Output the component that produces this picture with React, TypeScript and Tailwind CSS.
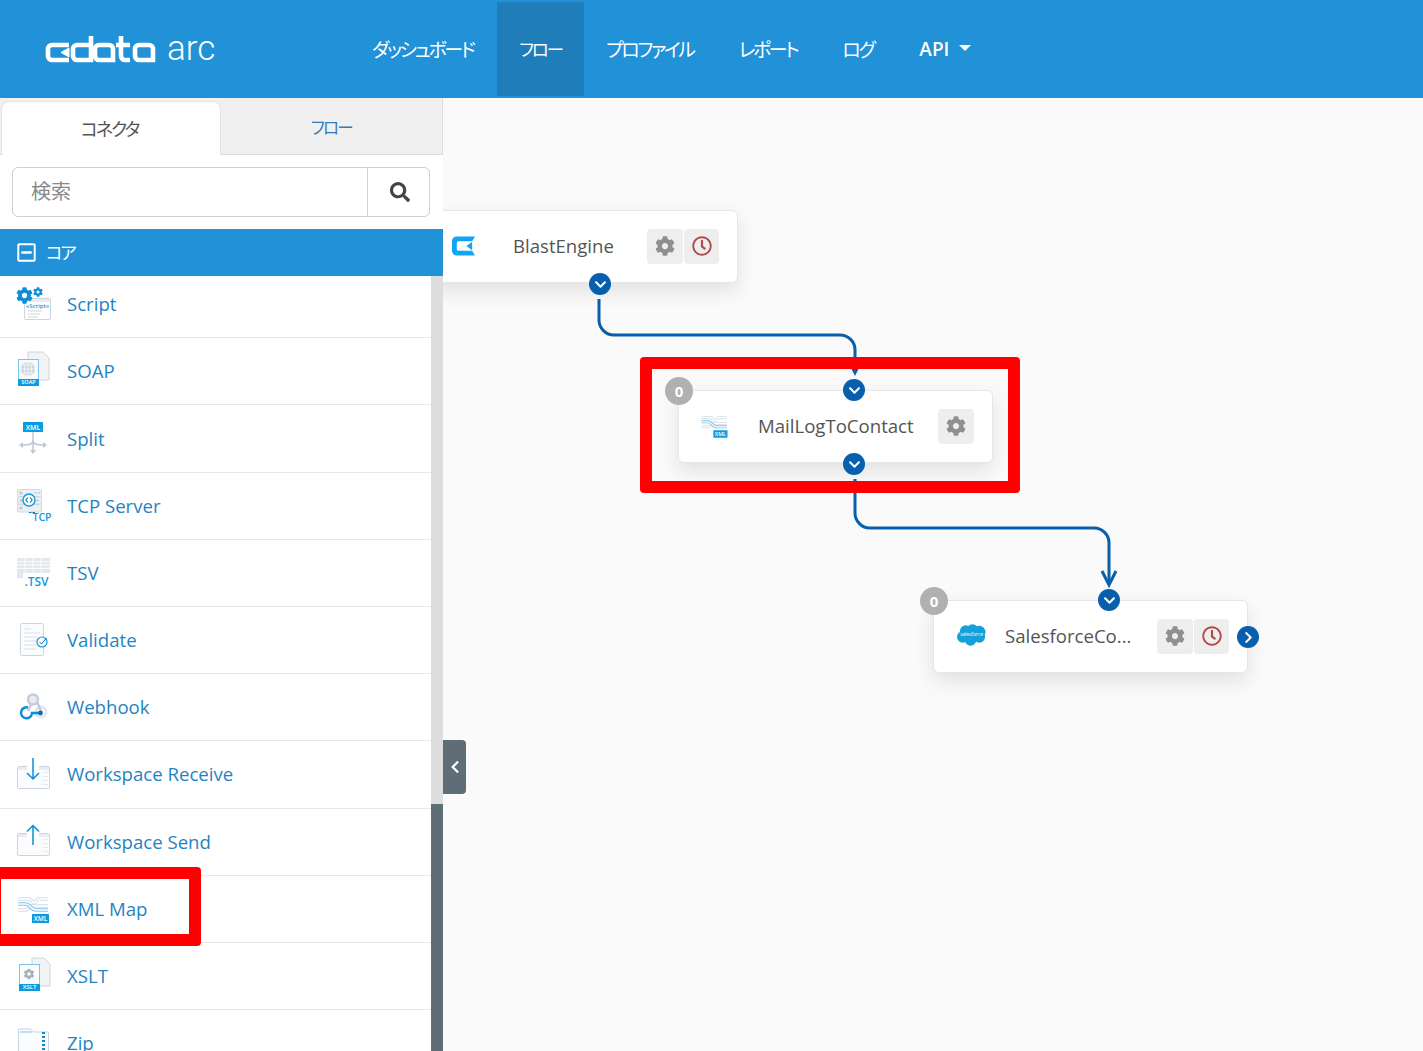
import type { ReactNode } from "react";
import { FaChevronDown, FaChevronLeft, FaChevronRight, FaCog, FaRegClock, FaRegMinusSquare, FaSearch } from "react-icons/fa";

const blue = "#0d9be0";
const grey = "#cdd5e0";
const pale = "#e9edf2";

function IconBox({ children, size = 36 }: { children: ReactNode; size?: number }) {
  return (
    <svg width={size} height={size} viewBox="0 0 36 36" className="overflow-visible shrink-0">
      {children}
    </svg>
  );
}

function Label({ x, y, w, h, text, size }: { x: number; y: number; w: number; h: number; text: string; size: number }) {
  return (
    <g>
      <rect x={x} y={y} width={w} height={h} fill={blue} rx="0.5" />
      <text x={x + w / 2} y={y + h - 1.8} textAnchor="middle" fill="#fff" fontSize={size} fontWeight="600" fontFamily="Open Sans, sans-serif">
        {text}
      </text>
    </g>
  );
}

function Doc({ x, y, w, h }: { x: number; y: number; w: number; h: number }) {
  return <path d={`M${x} ${y}H${x + w - 6}L${x + w} ${y + 6}V${y + h}H${x}Z`} fill="#f1f3f6" stroke={grey} strokeWidth="1" />;
}

function ScriptIcon() {
  return (
    <IconBox>
      <rect x="8.5" y="12.5" width="26" height="21" rx="1.5" fill="#fff" stroke={grey} />
      <rect x="9" y="13" width="25" height="3" fill={pale} />
      <text x="21.5" y="22" textAnchor="middle" fontSize="6" fill={blue} fontFamily="Open Sans, sans-serif" fontWeight="600">
        «Script»
      </text>
      <path d="M12 25h14M12 28h12M12 31h10" stroke={grey} strokeWidth="1" />
      <FaCog x={0} y={1} size={17} color="#0a8ed6" />
      <FaCog x={17} y={1} size={10} color="#0a8ed6" />
    </IconBox>
  );
}

function SoapIcon() {
  return (
    <IconBox>
      <Doc x={12} y={-1} w={21} h={28} />
      <rect x="2.5" y="6.5" width="20" height="26" fill="#f7fafc" stroke="#7cc6ee" />
      <circle cx="12" cy="16" r="7" fill={grey} />
      <path d="M5 16h14M12 9v14M7 12h10M7 20h10" stroke="#fff" strokeWidth="0.7" />
      <ellipse cx="12" cy="16" rx="3.5" ry="7" fill="none" stroke="#fff" strokeWidth="0.7" />
      <Label x={2} y={26} w={21} h={7} text="SOAP" size={5.5} />
    </IconBox>
  );
}

function SplitIcon() {
  return (
    <IconBox>
      <path d="M17 12v21M17 20c0 4-3 5-11 5M17 20c0 4 3 5 12 5" fill="none" stroke="#bcc8d6" strokeWidth="1.5" />
      <path d="M14 30l3 4 3-4zM7 22l-4 3 4 3zM27 22l4 3-4 3z" fill="#bcc8d6" />
      <Label x={7} y={2} w={20} h={10} text="XML" size={7} />
    </IconBox>
  );
}

function TcpIcon() {
  return (
    <IconBox>
      <rect x="1.5" y="1.5" width="24" height="7" rx="1" fill="#edf0f3" stroke="#d3d9e1" />
      <rect x="1.5" y="9" width="24" height="7" fill="#edf0f3" stroke="#d3d9e1" />
      <rect x="1.5" y="16.5" width="24" height="7.500" rx="1" fill="#edf0f3" stroke="#d3d9e1" />
      <rect x="3.500" y="3.500" width="3" height="3" rx="1" fill="#c4ccd6" />
      <rect x="3.500" y="11" width="3" height="3" rx="1" fill="#c4ccd6" />
      <rect x="3.500" y="18.500" width="3" height="3" rx="1" fill="#c4ccd6" />
      <path d="M18 5h2.500M21.500 5h2.500M20 12.500h3" stroke="#b7c0cc" strokeWidth="1" />
      <circle cx="13" cy="12" r="6" fill="#fff" stroke={blue} strokeWidth="1.400" />
      <path d="M12 9.500l-2.200 2.500 2.200 2.500M14 9.500l2.200 2.500-2.200 2.500" fill="none" stroke="#0a6fb5" strokeWidth="1.100" />
      <path d="M13 24.500h2.500M16.500 24.500h2.500" stroke="#0a6fb5" strokeWidth="1.200" />
      <text x="26" y="33" textAnchor="middle" fontSize="10.500" fill={blue} fontWeight="600" fontFamily="Open Sans, sans-serif">
        TCP
      </text>
    </IconBox>
  );
}

function TsvIcon() {
  return (
    <IconBox>
      <rect x="1" y="3" width="33" height="15" fill="#e4e8ee" />
      <path d="M1 6.5h33M1 10h33M1 13.500h33M9 3v15M17 3v15M25 3v15" stroke="#fff" strokeWidth="0.8" />
      <rect x="1" y="18" width="6" height="5" fill="#e4e8ee" />
      <text x="20.500" y="31" textAnchor="middle" fontSize="12" fill={blue} fontWeight="600" fontFamily="Open Sans, sans-serif">
        .TSV
      </text>
    </IconBox>
  );
}

function ValidateIcon() {
  return (
    <IconBox>
      <rect x="4.500" y="1.500" width="23" height="32" rx="1" fill="#fbfcfd" stroke={grey} />
      <path d="M8 7h7M8 11h16M8 15h14M8 19h14M8 23h12M8 27h12" stroke="#d9dfe7" strokeWidth="1" />
      <circle cx="26" cy="20" r="5" fill="#fff" stroke={blue} strokeWidth="1.200" />
      <path d="M23.500 20l2 2 5-6" fill="none" stroke="#0a6fb5" strokeWidth="1" />
    </IconBox>
  );
}

function WebhookIcon() {
  return (
    <IconBox>
      <circle cx="25" cy="23" r="5" fill="none" stroke="#e3e7ec" strokeWidth="3" />
      <path d="M12 22l4-9" stroke="#c4ccd8" strokeWidth="2.500" />
      <circle cx="17" cy="10.500" r="5" fill="#e8ebf0" stroke="#c4ccd8" strokeWidth="2.500" />
      <path d="M21 13l4 9" stroke="#c4ccd8" strokeWidth="2.500" />
      <path d="M12 18.500a5.500 5.500 0 1 0 4 5.500h9" fill="none" stroke="#0a8ed6" strokeWidth="2.400" />
      <circle cx="24.500" cy="24" r="2.400" fill="#0a6fb5" />
    </IconBox>
  );
}

function WindowArrow({ up }: { up: boolean }) {
  const top = up ? 9.5 : 10.5;
  return (
    <IconBox>
      <rect x="1.500" y={top} width="32" height="22" rx="1.500" fill="#fbfcfd" stroke={grey} />
      <rect x="2" y={top + 0.5} width="31" height="3" fill={pale} />
      <path d={`M26 ${top + 6}h6M26 ${top + 10}h6M26 ${top + 14}h6M26 ${top + 18}h6`} stroke={pale} strokeWidth="1.200" />
      <rect x="11" y={top - 1} width="12" height="5.500" fill="#fff" />
      {up ? (
        <path d="M17 21V1.500M11 7.500l6-6 6 6" fill="none" stroke="#0a8ed6" strokeWidth="1.500" />
      ) : (
        <path d="M17 2v21M11 17l6 6 6-6" fill="none" stroke="#0a8ed6" strokeWidth="1.500" />
      )}
    </IconBox>
  );
}

function XmlMapIcon({ size = 36 }: { size?: number }) {
  const bands = [
    { d: "M2 8H14L18 12L22 8H32", color: "#d5dde6" },
    { d: "M2 19H10L15 15H32", color: "#d5dde6" },
    { d: "M2 13H10C14 13 15 19 20 19H32", color: "#7cc3ee" },
  ];
  return (
    <IconBox size={size}>
      {bands.map((b) => (
        <g key={b.d} fill="none">
          <path d={b.d} stroke={b.color} strokeWidth="3.600" />
          <path d={b.d} stroke="#fff" strokeWidth="1.600" />
        </g>
      ))}
      <Label x={16} y={23} w={17} h={9} text="XML" size={6.500} />
    </IconBox>
  );
}

function XsltIcon() {
  return (
    <IconBox>
      <Doc x={16} y={0} w={18} h={28} />
      <rect x="3.500" y="6.500" width="20" height="26" fill="#fbfcfd" stroke="#7cc6ee" />
      <FaCog x={7.500} y={10.500} size={11} color="#a7b1bd" />
      <Label x={3} y={26} w={21} h={7} text="XSLT" size={6} />
    </IconBox>
  );
}

function ZipIcon() {
  return (
    <IconBox>
      <path d="M2.500 4h12l3 3h15v28h-30z" fill="#fbfcfd" stroke="#c9d3df" />
      <path d="M4 7h12" stroke="#7cc6ee" />
      <path d="M26 8h3M26 12h3M26 16h3M26 20h3M26 24h3" stroke="#0a8ed6" strokeWidth="2" />
      <Label x={3} y={26} w={15} h={8} text="ZIP" size={6} />
    </IconBox>
  );
}

const connectors = [
  { name: "Script", icon: <ScriptIcon /> },
  { name: "SOAP", icon: <SoapIcon /> },
  { name: "Split", icon: <SplitIcon /> },
  { name: "TCP Server", icon: <TcpIcon /> },
  { name: "TSV", icon: <TsvIcon /> },
  { name: "Validate", icon: <ValidateIcon /> },
  { name: "Webhook", icon: <WebhookIcon /> },
  { name: "Workspace Receive", icon: <WindowArrow up={false} /> },
  { name: "Workspace Send", icon: <WindowArrow up={true} /> },
  { name: "XML Map", icon: <XmlMapIcon /> },
  { name: "XSLT", icon: <XsltIcon /> },
  { name: "Zip", icon: <ZipIcon /> },
];

const navItems = [
  { label: "ダッシュボード", cls: "pr-[24px] tracking-[-2.400px]" },
  { label: "フロー", cls: "pr-[22px] text-[17.500px] tracking-[-2px] bg-[#1f7dba]" },
  { label: "プロファイル", cls: "pr-[23px] tracking-[-2.400px]" },
  { label: "レポート", cls: "pr-[23px] tracking-[-2.400px]" },
  { label: "ログ", cls: "pr-[23px] tracking-[-2.400px]" },
];

function Logo() {
  return (
    <div className="flex items-center w-[350px] pl-[45px]">
      <svg width="111" height="28" viewBox="45 34 111 28" role="img" aria-label="CData" className="shrink-0">
        <g fill="none" stroke="#fff" strokeWidth="4.600">
          <path d="M69 44H52a4 4 0 0 0-4 4v7a4 4 0 0 0 4 4H69" />
          <path d="M69 47l-8 4.500 8 4.500Z" fill="#fff" strokeWidth="1" />
          <path d="M91 35V59H77a4 4 0 0 1-4-4V48a4 4 0 0 1 4-4H89" />
          <path d="M113 59H99a4 4 0 0 1-4-4V48a4 4 0 0 1 4-4H109a4 4 0 0 1 4 4Z" />
          <path d="M121 35V55a4 4 0 0 0 4 4H130M116 44H130" />
          <path d="M153 59H139a4 4 0 0 1-4-4V48a4 4 0 0 1 4-4H149a4 4 0 0 1 4 4Z" />
        </g>
      </svg>
      <span className="ml-[11px] text-[35px] leading-none font-light text-white font-['Roboto',sans-serif] -mt-[1px]">arc</span>
    </div>
  );
}

function Header() {
  return (
    <header className="h-[98px] bg-[#2191d8] flex items-stretch shrink-0">
      <Logo />
      <nav className="flex items-stretch py-[2px] font-['Noto_Sans_CJK_JP',sans-serif] text-[19px] text-white">
        {navItems.map((item) => (
          <a key={item.label} className={"flex items-center pl-[22px] [font-feature-settings:'palt'] " + item.cls}>
            {item.label}
          </a>
        ))}
        <a className="flex items-center pl-[23px] pr-[23px] gap-[10px] font-['Open_Sans',sans-serif] font-semibold text-[19px]">
          API
          <span className="w-0 h-0 border-x-[6px] border-x-transparent border-t-[6px] border-t-white -mt-[3px]" />
        </a>
      </nav>
    </header>
  );
}

function Sidebar() {
  return (
    <aside className="relative w-[443px] shrink-0 flex flex-col bg-white overflow-hidden">
      <div className="flex h-[57px] shrink-0 bg-[#f0f0f0] border-b border-r border-[#dddddd] pt-[3px] pl-px font-['Noto_Sans_CJK_JP',sans-serif] text-[18px] [font-feature-settings:'palt']">
        <div className="w-[220px] h-[54px] pr-[3px] rounded-t-lg bg-white border-x border-t border-[#e2e2e2] flex items-center justify-center text-[#555555] tracking-[-2px]">
          コネクタ
        </div>
        <div className="flex-1 flex items-center justify-center text-[#337ab7] text-[16.500px] tracking-[-1.700px]">フロー</div>
      </div>
      <div className="pl-[12px] pr-[13px] py-[12px] shrink-0">
        <div className="h-[50px] flex rounded-md border border-[#cfcfd4] bg-white">
          <div className="flex-1 flex items-center pl-[18px] pb-[3px] text-[20px] text-[#888888] font-['Noto_Sans_CJK_JP',sans-serif]">検索</div>
          <div className="w-[62px] pl-[3px] border-l border-[#cfcfd4] flex items-center justify-center text-[#444444]">
            <FaSearch size={20} />
          </div>
        </div>
      </div>
      <div className="h-[47px] shrink-0 bg-[#2191d8] flex items-center pl-[16px] gap-[9px] text-white font-['Noto_Sans_CJK_JP',sans-serif] text-[17.500px] tracking-[-2.200px] [font-feature-settings:'palt']">
        <FaRegMinusSquare size={21} />
        コア
      </div>
      <div className="flex flex-1 min-h-0">
        <ul className="flex-1 overflow-hidden font-['Open_Sans',sans-serif] text-[18.600px] text-[#1f83c3]">
          {connectors.map((c, i) => (
            <li
              key={c.name}
              className={"h-[67.200px] flex items-center pl-[16px] gap-[15px] border-b border-[#e8e8e8] " + (i === 0 ? "-mt-[5px]" : "")}
            >
              {c.icon}
              <span>{c.name}</span>
            </li>
          ))}
        </ul>
        <div className="w-[12px] shrink-0 flex flex-col">
          <div className="h-[528px] bg-[#dddddd]" />
          <div className="flex-1 bg-[#5f6e76]" />
        </div>
      </div>
      {/* red annotation on XML Map */}
      <div className="absolute left-[-11px] top-[769px] w-[212px] h-[79px] border-[12px] border-[#ff0000] rounded" />
    </aside>
  );
}

function Dot({ className, children }: { className: string; children: ReactNode }) {
  return (
    <span className={"absolute z-10 w-[22px] h-[22px] rounded-full bg-[#085fae] text-white flex items-center justify-center " + className}>
      {children}
    </span>
  );
}

function Buttons({ clock }: { clock: boolean }) {
  return (
    <div className="ml-auto flex gap-px">
      <span className="w-[36px] h-[35px] rounded-sm bg-[#eeeeee] flex items-center justify-center text-[#8f8f8f]">
        <FaCog size={20} />
      </span>
      {clock && (
        <span className="w-[35px] h-[35px] rounded-sm bg-[#eeeeee] flex items-center justify-center text-[#b24a4a]">
          <FaRegClock size={20} />
        </span>
      )}
    </div>
  );
}

function Node({ className, icon, label, labelClass, clock, children }: {
  className: string;
  icon: ReactNode;
  label: string;
  labelClass: string;
  clock: boolean;
  children: ReactNode;
}) {
  return (
    <div className={"absolute h-[73px] w-[315px] pr-[18px] pb-px rounded-md border border-[#e6e6e6] bg-white shadow-[0_8px_20px_rgba(0,0,0,0.1)] flex items-center " + className}>
      {icon}
      <span className={"text-[18.600px] text-[#555555] font-['Open_Sans',sans-serif] " + labelClass}>{label}</span>
      <Buttons clock={clock} />
      {children}
    </div>
  );
}

function Badge() {
  return (
    <span className="absolute z-10 -left-[14px] -top-[14px] w-[28px] h-[28px] rounded-full bg-[#b0b0b0] text-white text-[15px] font-bold flex items-center justify-center font-['Open_Sans',sans-serif]">
      0
    </span>
  );
}

function BlastMark() {
  return (
    <svg width="25" height="22" viewBox="0 0 26 22" className="shrink-0">
      <path d="M6 1H25L22 6H8a2 2 0 0 0-2 2V14a2 2 0 0 0 2 2H22L25 21H6a5 5 0 0 1-5-5V6a5 5 0 0 1 5-5Z" fill="#12a5f4" />
      <path d="M22 6.500L16 11L22 15.500Z" fill="#12a5f4" />
    </svg>
  );
}

function Cloud() {
  return (
    <svg width="31" height="24" viewBox="0 0 32 24" className="shrink-0 -mt-[2px]">
      <g fill="#16a0db">
        <circle cx="10" cy="8" r="6" />
        <circle cx="17" cy="7" r="6" />
        <circle cx="24" cy="9" r="6.500" />
        <circle cx="7" cy="14" r="6" />
        <circle cx="15" cy="17" r="6" />
        <circle cx="24" cy="14" r="6" />
      </g>
      <text x="16" y="13.500" textAnchor="middle" fontSize="5" fill="#fff" fontFamily="Open Sans, sans-serif">
        salesforce
      </text>
    </svg>
  );
}

function Canvas() {
  return (
    <main className="relative flex-1 bg-[#fafafa] overflow-hidden">
      <svg className="absolute inset-0" width="980" height="953" viewBox="443 98 980 953" fill="none">
        <path d="M599 299V320a15 15 0 0 0 15 15H840a15 15 0 0 1 15 15V372" stroke="#085fae" strokeWidth="3" />
        <path d="M851 368H859L855 376Z" fill="#085fae" />
        <path d="M855 479V513a15 15 0 0 0 15 15H1094a15 15 0 0 1 15 15V584" stroke="#085fae" strokeWidth="3" />
        <path d="M1102 571L1109 585L1116 571" stroke="#085fae" strokeWidth="3" />
      </svg>

      <Node className="left-[-20px] top-[112px] pl-[27px]" icon={<BlastMark />} label="BlastEngine" labelClass="ml-[37px]" clock>
        <Dot className="left-[165px] top-[62px]"><FaChevronDown size={13} /></Dot>
      </Node>

      <Node className="left-[235px] top-[292px] pl-[21px]" icon={<XmlMapIcon size={30} />} label="MailLogToContact" labelClass="ml-[28px]" clock={false}>
        <Badge />
        <Dot className="left-[164px] -top-[12px]"><FaChevronDown size={13} /></Dot>
        <Dot className="left-[164px] top-[62px]"><FaChevronDown size={13} /></Dot>
      </Node>

      <Node className="left-[490px] top-[502px] pl-[22px]" icon={<Cloud />} label="SalesforceCo..." labelClass="ml-[18px]" clock>
        <Badge />
        <Dot className="left-[164px] -top-[12px]"><FaChevronDown size={13} /></Dot>
        <Dot className="left-[303px] top-[25px]"><FaChevronRight size={13} /></Dot>
      </Node>

      {/* red annotation on the selected node */}
      <div className="absolute z-20 left-[197px] top-[259px] w-[380px] h-[136px] border-[12px] border-[#ff0000] rounded" />

      <button className="absolute left-0 top-[642px] w-[23px] h-[54px] bg-[#5f6e76] rounded-r-sm flex items-center justify-center text-white">
        <FaChevronLeft size={14} />
      </button>
    </main>
  );
}

export default function App() {
  return (
    <div className="h-screen flex flex-col overflow-hidden">
      <Header />
      <div className="flex flex-1 min-h-0">
        <Sidebar />
        <Canvas />
      </div>
    </div>
  );
}
